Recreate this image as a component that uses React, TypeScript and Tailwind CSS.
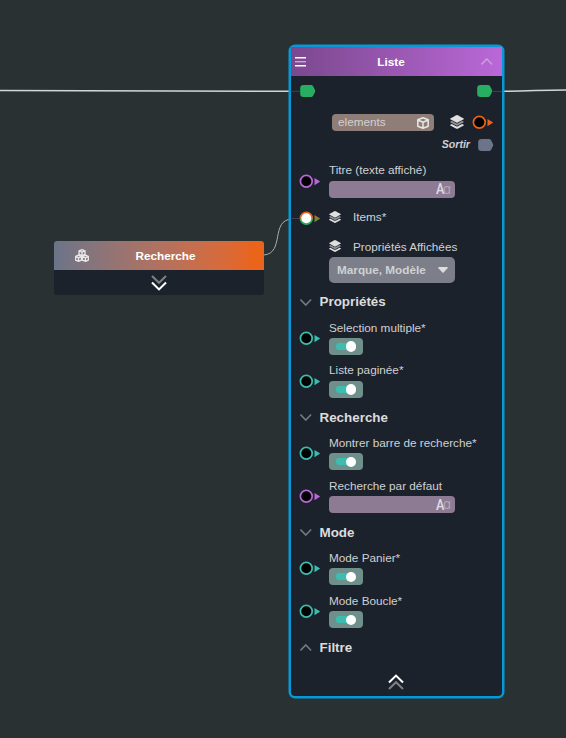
import React from "react";

const TEAL = "#3dbdb0";
const PURPLE = "#b868d8";
const ORANGE = "#e8641b";

function Port({ color, fill = "#000", ring, tip }: { color: string; fill?: string; ring?: string; tip?: string }) {
  return (
    <svg className="block h-[14px] w-[22px] shrink-0" viewBox="0 0 22 14">
      <defs>
        <linearGradient id="mixed" x1="0" y1="0" x2="0" y2="1">
          <stop offset="0.35" stopColor="#e8641b" />
          <stop offset="0.75" stopColor="#27ae60" />
        </linearGradient>
        <linearGradient id="mixedTip" x1="0" y1="0" x2="0" y2="1">
          <stop offset="0" stopColor="#c9661f" />
          <stop offset="1" stopColor="#3f9a4c" />
        </linearGradient>
      </defs>
      <circle cx="7.3" cy="7.2" r="5.9" fill={fill} stroke={ring ?? color} strokeWidth="1.7" />
      <path d="M15.5 4 L21.2 7.6 L15.5 11.2 Z" fill={tip ?? color} />
    </svg>
  );
}

function FlowPort({ color }: { color: string }) {
  return (
    <svg className="block h-3 w-4 shrink-0" viewBox="0 0 16 12">
      <path d="M3.5 0 H11 Q12.3 0 13 1 L15 5 Q15.5 6 15 7 L13 11 Q12.3 12 11 12 H3.5 Q0.2 12 0.2 8.7 V3.3 Q0.2 0 3.5 0Z" fill={color} />
    </svg>
  );
}

function Layers({ className }: { className: string }) {
  return (
    <svg className={"block shrink-0 " + className} viewBox="0 40 512 432" preserveAspectRatio="none" fill="#e0e0e0">
      <path d="M12 149 L232 48 Q256 38 280 48 L500 149 Q516 160 500 170 L280 271 Q256 281 232 271 L12 170 Q-4 160 12 149Z" />
      <path opacity=".6" d="M12 245 L66 220 L220 291 Q256 306 292 291 L446 220 L500 245 Q516 256 500 267 L280 367 Q256 377 232 367 L12 267 Q-4 256 12 245Z" />
      <path d="M12 341 L66 316 L220 387 Q256 402 292 387 L446 316 L500 341 Q516 352 500 363 L280 463 Q256 473 232 463 L12 363 Q-4 352 12 341Z" />
    </svg>
  );
}

function Chevron({ up = false, color = "#777b80" }: { up?: boolean; color?: string }) {
  return (
    <svg className="block h-[7px] w-3 shrink-0" viewBox="0 0 12 7" fill="none" stroke={color} strokeWidth="1.5">
      <path d={up ? "M0.5 6.4 L5.8 0.9 L11.1 6.4" : "M0.5 0.6 L5.8 6.1 L11.1 0.6"} />
    </svg>
  );
}

function DoubleChevron({ up = false }: { up?: boolean }) {
  return (
    <svg className="block h-4 w-4" viewBox="0 0 16 16" fill="none" strokeWidth="2.1">
      <path d={up ? "M1 15 L8 8.3 L15 15" : "M1 1 L8 7.7 L15 1"} stroke="#7c8085" />
      <path d={up ? "M1 8.5 L8 1.6 L15 8.5" : "M1 7.5 L8 14.4 L15 7.5"} stroke="#fff" />
    </svg>
  );
}

function Cube({ x = 0, y = 0, s = 1, w = 1.5 }: { x?: number; y?: number; s?: number; w?: number }) {
  return (
    <g transform={`translate(${x} ${y}) scale(${s})`} fill="none" stroke="#e9e7e6" strokeWidth={w} strokeLinejoin="round">
      <path d="M6 0.8 L11.2 2.8 V9.2 L6 11.3 L0.8 9.2 V2.8 Z M0.8 3 L6 5.2 L11.2 3 M6 5.2 V11.3" />
    </g>
  );
}

function Toggle() {
  return (
    <div className="flex h-[17px] w-[34px] items-center rounded-[4px] bg-[#6f8f8a] pl-[7px]">
      <div className="flex h-[7px] w-5 items-center justify-end rounded-[3px] bg-[#3dbdb0]">
        <div className="size-[10.5px] shrink-0 rounded-full bg-white" />
      </div>
    </div>
  );
}

function TextInput() {
  return (
    <div className="flex h-[17px] w-[126px] items-center justify-end rounded-[4px] bg-[#8d7b93] pr-1 leading-none">
      <span className="-mr-px inline-block origin-right scale-x-90 font-['Roboto',sans-serif] text-[14px] font-medium text-[#e0dce2]">A</span>
      <span className="font-['Inter',sans-serif] text-[13px] text-[#b3a7b8] [font-feature-settings:'cv11']">a</span>
    </div>
  );
}

function Field({ label, color, children }: { label: string; color: string; children: React.ReactNode }) {
  return (
    <div className="flex h-[42.85px] shrink-0 items-center pl-2">
      <Port color={color} />
      <div className="ml-2 flex h-full flex-col pt-1">
        <div className="h-[17.5px] leading-[14px] whitespace-nowrap">{label}</div>
        {children}
      </div>
    </div>
  );
}

function SectionTitle({ title, up }: { title: string; up?: boolean }) {
  return (
    <div className="flex h-[29.55px] shrink-0 items-center pl-[9px]">
      <div className="pt-px"><Chevron up={up} /></div>
      <h3 className="ml-[7.5px] pt-[1.2px] text-[13.4px] leading-4 font-bold text-[#dcdcdc]">{title}</h3>
    </div>
  );
}

function SearchNode() {
  return (
    <section className="absolute top-[241px] left-[54px] w-[210px] overflow-hidden rounded-[3px] bg-[#1c222c]">
      <header className="flex h-[29px] items-center bg-linear-to-r from-[#6b7489] to-[#ea6419] to-95% pl-[21px]">
        <svg className="block h-[13px] w-[14px]" viewBox="0 0 14 13">
          <Cube x={3.6} y={0.2} s={0.57} w={2.4} />
          <Cube x={0.1} y={5.8} s={0.57} w={2.4} />
          <Cube x={7} y={5.8} s={0.57} w={2.4} />
        </svg>
        <h2 className="ml-[46.5px] text-[11.75px] font-bold text-white">Recherche</h2>
      </header>
      <div className="flex h-[25px] items-center justify-center">
        <DoubleChevron />
      </div>
    </section>
  );
}

function ListNode() {
  return (
    <section className="absolute top-[44.5px] left-[289px] flex h-[653.5px] w-[215px] flex-col rounded-[6px] border-2 border-[#0698d8] bg-[#1c222c] text-[11.75px] text-[#d0d1d2] shadow-[0_0_0_0.5px_#0698d8]">
      <header className="flex h-[29.5px] shrink-0 items-center bg-linear-to-r from-[#7b488e] to-[#ba68d8] pr-[9px] pl-1">
        <svg className="block h-[11px] w-[11px]" viewBox="0 0 11 11">
          <path d="M0 1.7H11M0 9.7H11" stroke="#fff" strokeWidth="1.4" />
          <path d="M0 5.7H11" stroke="#c9a9d3" strokeWidth="1.4" />
        </svg>
        <h2 className="flex-1 pt-px pr-[5px] text-center text-[11.75px] font-bold text-white">Liste</h2>
        <Chevron up color="#cf9be2" />
      </header>
      <div className="flex h-[30px] shrink-0 items-center justify-between pl-[9px]">
        <FlowPort color="#27ae60" />
        <div className="flex items-center">
          <FlowPort color="#27ae60" />
          <div className="h-px w-[9px] bg-[#3c434b]" />
        </div>
      </div>
      <div className="flex h-[33px] shrink-0 items-center pl-[41px]">
        <div className="flex h-[17px] w-[101.5px] items-center justify-between rounded-[4px] bg-[#8e7e77] pr-[5px] pl-1.5 text-[#d5d0cd]">
          <span className="pb-px leading-[14px]">elements</span>
          <svg className="block size-3" viewBox="0 0 12 12"><Cube /></svg>
        </div>
        <div className="ml-[16.5px] pb-px"><Layers className="h-[14px] w-[14px]" /></div>
        <div className="ml-2 pb-px"><Port color={ORANGE} /></div>
      </div>
      <div className="flex h-[20.2px] shrink-0 items-start justify-end pr-2">
        <span className="mr-2 -mt-px text-[10.6px] leading-3 font-bold italic">Sortir</span>
        <FlowPort color="#6b7489" />
      </div>
      <Field label="Titre (texte affiché)" color={PURPLE}><TextInput /></Field>
      <div className="flex h-[29.5px] shrink-0 items-center pl-2">
        <div className="pt-[3px]"><Port color={TEAL} fill="#fff" ring="url(#mixed)" tip="url(#mixedTip)" /></div>
        <Layers className="ml-2 size-3" />
        <span className="ml-3">Items*</span>
      </div>
      <div className="flex h-[55.45px] shrink-0 flex-col pt-[8.5px] pl-[38px]">
        <div className="flex h-[17px] items-start leading-[14px]">
          <Layers className="size-3" />
          <span className="ml-3 whitespace-nowrap">Propriétés Affichées</span>
        </div>
        <div className="flex h-[26px] w-[126px] shrink-0 items-center justify-between rounded-[5px] bg-[#7c7f89] pr-[7px] pl-2 font-bold">
          <span>Marque, Modèle</span>
          <svg className="block h-[6px] w-[10px]" viewBox="0 0 10 6"><path d="M.8 0H9.2Q10 .5 9.5 1.2L5.6 5.6Q5 6 4.4 5.6L.5 1.2Q0 .5 .8 0Z" fill="#dedede" /></svg>
        </div>
      </div>
      <SectionTitle title="Propriétés" />
      <Field label="Selection multiple*" color={TEAL}><Toggle /></Field>
      <Field label="Liste paginée*" color={TEAL}><Toggle /></Field>
      <SectionTitle title="Recherche" />
      <Field label="Montrer barre de recherche*" color={TEAL}><Toggle /></Field>
      <Field label="Recherche par défaut" color={PURPLE}><TextInput /></Field>
      <SectionTitle title="Mode" />
      <Field label="Mode Panier*" color={TEAL}><Toggle /></Field>
      <Field label="Mode Boucle*" color={TEAL}><Toggle /></Field>
      <SectionTitle title="Filtre" up />
      <div className="flex justify-center pt-3 pr-[1.5px]"><DoubleChevron up /></div>
    </section>
  );
}

export default function App() {
  return (
    <main className="relative h-[738px] w-[566px] overflow-hidden bg-[#2a3132] font-['Liberation_Sans',Arial,sans-serif]">
      <svg className="absolute inset-0" width="566" height="738" fill="none">
        <path d="M0 90.5 L289 91.3 M504 91.2 C530 91.2 540 90 566 90" stroke="#d4d6d6" strokeWidth="1.5" />
        <path d="M264 255 C285 253 270 220 292 219" stroke="#a9adad" strokeWidth="1" />
      </svg>
      <SearchNode />
      <ListNode />
      <svg className="pointer-events-none absolute inset-0" width="566" height="738" fill="none">
        <path d="M291.5 91.3 H300 M291.5 218.5 H300" stroke="#3c434b" strokeWidth="1" />
      </svg>
    </main>
  );
}
